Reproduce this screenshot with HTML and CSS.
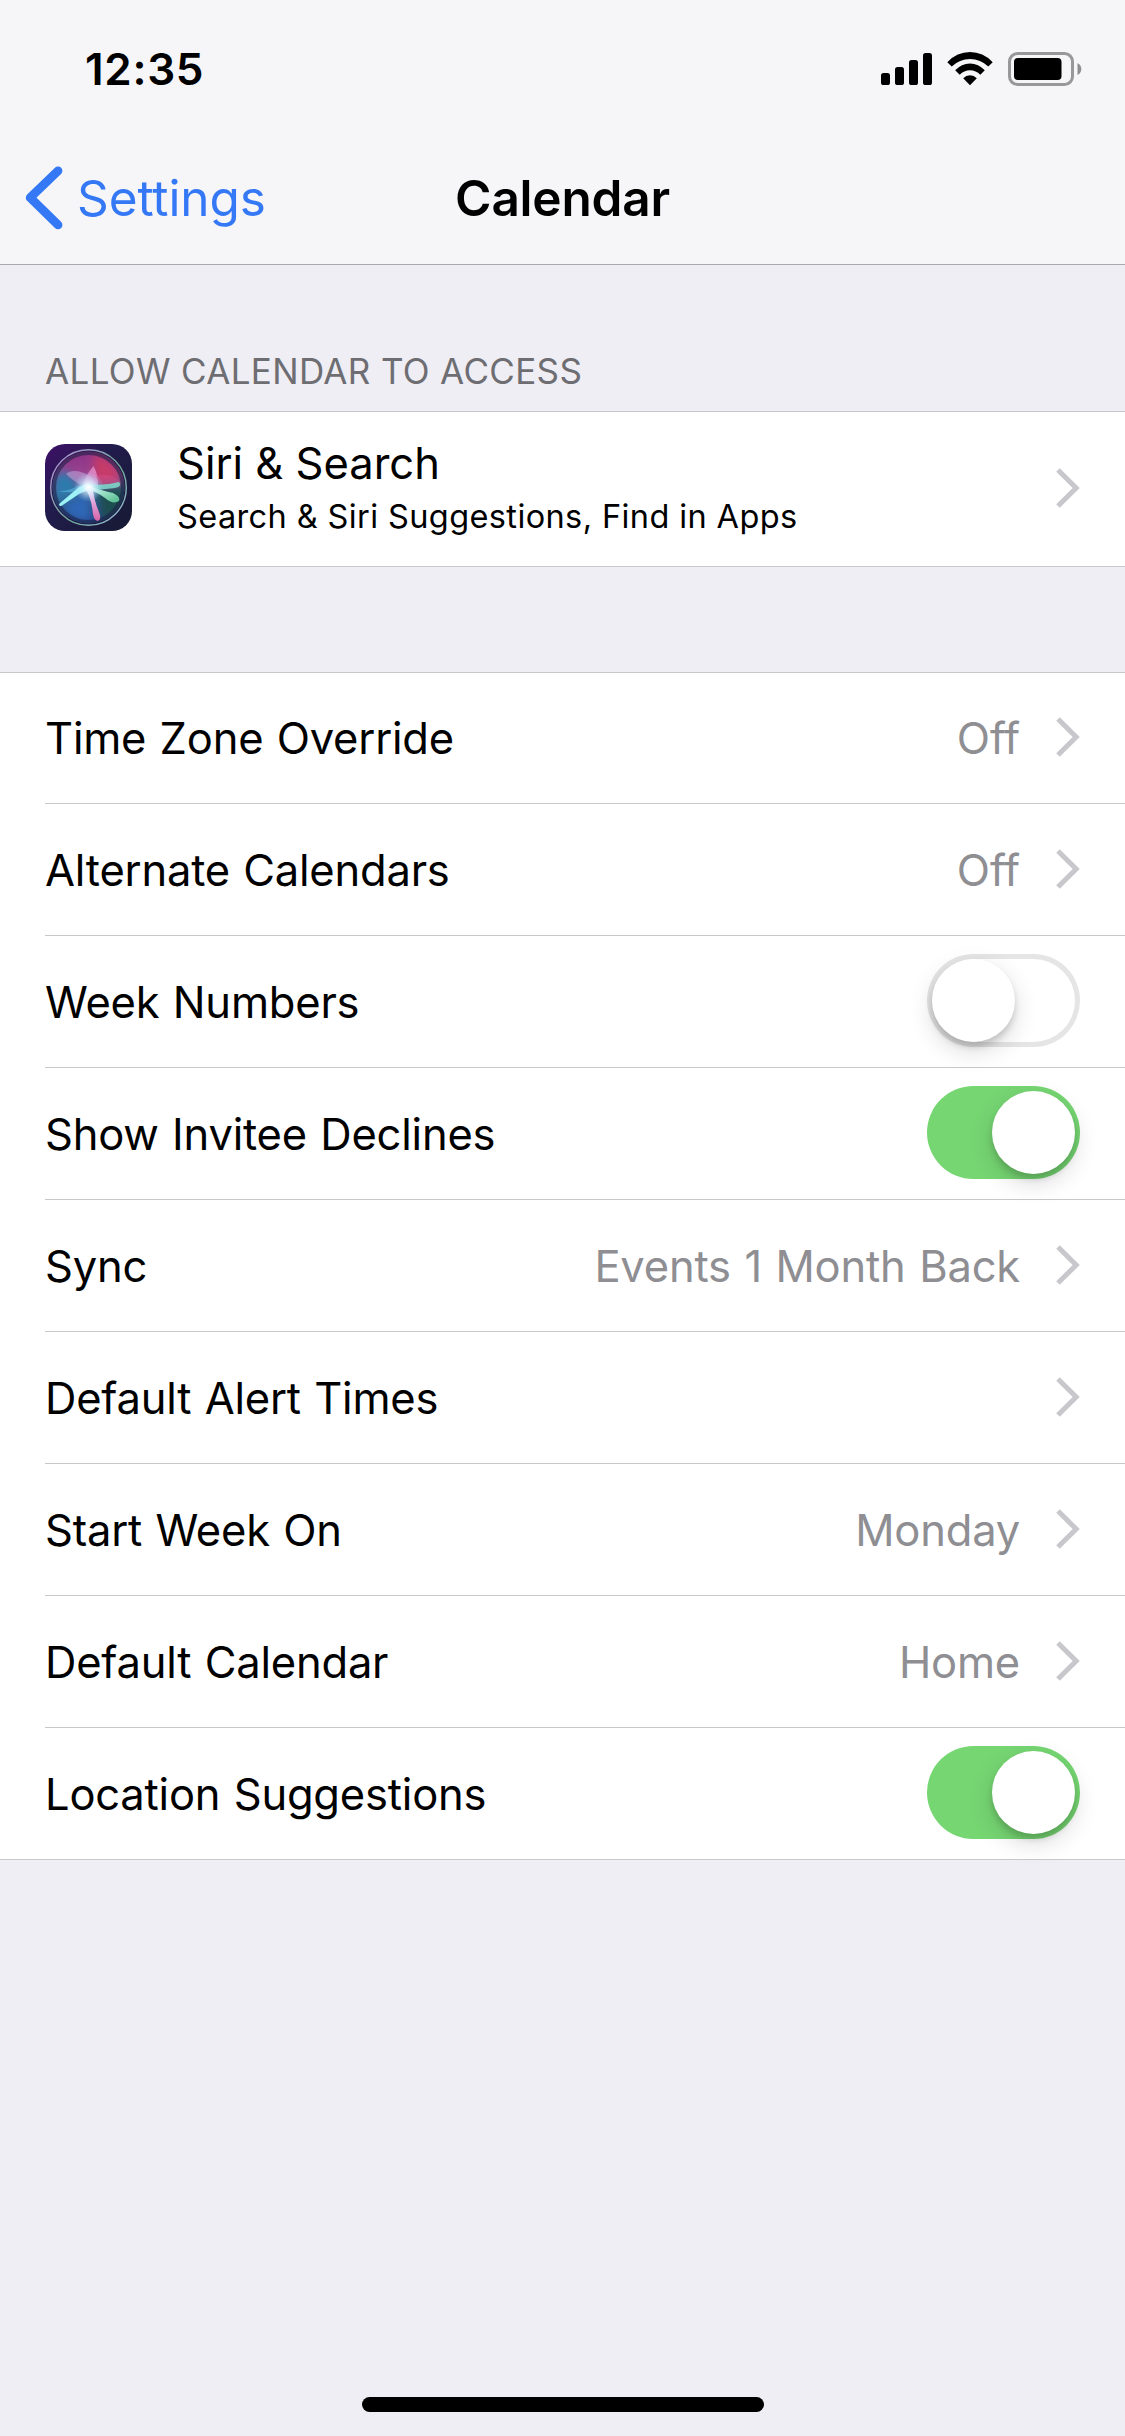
FILE: index.html
```
<!DOCTYPE html>
<html lang="en">
  <head>
    <meta charset="utf-8">
    <title>Calendar</title>
    <link rel="stylesheet" href="styles.css">
  </head>
  <body>
    <!-- shared shapes -->
    <svg class="defs" width="0" height="0">
      <symbol id="chevron" viewBox="0 0 24 40">
        <path d="M2 2L20.2 20L2 38" fill="none" stroke="#c7c7cc" stroke-width="5" />
      </symbol>
    </svg>

    <header class="top">
      <div class="status">
        <span class="time">12:35</span>
        <svg class="signal" width="51" height="34" viewBox="0 0 51 34">
          <rect x="0" y="21" width="9" height="12" rx="2.6" />
          <rect x="14" y="15" width="9" height="18" rx="2.6" />
          <rect x="28" y="8" width="9" height="25" rx="2.6" />
          <rect x="42" y="1" width="9" height="32" rx="2.6" />
        </svg>
        <svg class="wifi" width="46" height="34" viewBox="0 0 46 34">
          <path d="M0.3 10.2Q10 0.1 23 0.1T45.7 10.2L41.3 14.6Q33.5 7 23 7T4.7 14.6Z" />
          <path d="M8.2 18.3Q14.5 11.4 23 11.4T37.8 18.3L33.3 22.8Q29 18.3 23 18.3T12.7 22.8Z" />
          <path d="M16.2 26.3Q19 23.2 23 23.2T29.8 26.3L23 33.2Z" />
        </svg>
        <svg class="battery" width="74" height="34" viewBox="0 0 74 34">
          <rect x="1.5" y="1.5" width="63" height="31" rx="8" fill="none" stroke="#98989a" stroke-width="3" />
          <rect x="6" y="6" width="47.5" height="22" rx="4" />
          <path d="M69.5 11Q73.3 13 73.3 17T69.5 23Z" fill="#8e8e90" />
        </svg>
      </div>
      <nav class="nav">
        <a class="back" href="#">
          <svg width="38" height="64" viewBox="0 0 38 64">
            <path d="M33 4.8L5.2 31.7L33 58.9" fill="none" stroke="#3478f6" stroke-width="8.8" stroke-linecap="round" stroke-linejoin="round" />
          </svg>
          <span>Settings</span>
        </a>
        <h1>Calendar</h1>
      </nav>
    </header>

    <h2 class="section">ALLOW CALENDAR TO ACCESS</h2>
    <ul class="group">
      <li class="row app">
        <svg class="siri" width="87" height="87" viewBox="0 0 87 87">
          <defs>
            <linearGradient id="tile" x1="0" y1="0" x2="1" y2="1">
              <stop offset="0" stop-color="#3f1068" />
              <stop offset="0.4" stop-color="#211c4c" />
              <stop offset="1" stop-color="#161a33" />
            </linearGradient>
            <linearGradient id="orb" x1="0.45" y1="0" x2="0.5" y2="1">
              <stop offset="0" stop-color="#8a2f86" />
              <stop offset="0.35" stop-color="#9a4690" />
              <stop offset="0.6" stop-color="#35648f" />
              <stop offset="1" stop-color="#233f86" />
            </linearGradient>
            <linearGradient id="ring" x1="0" y1="0" x2="1" y2="1">
              <stop offset="0" stop-color="#b68fd6" />
              <stop offset="0.6" stop-color="#6fa898" />
              <stop offset="1" stop-color="#a3c0e6" />
            </linearGradient>
            <radialGradient id="glow">
              <stop offset="0" stop-color="#fff" />
              <stop offset="0.3" stop-color="#e2f8ff" stop-opacity="0.8" />
              <stop offset="1" stop-color="#9fd0ff" stop-opacity="0" />
            </radialGradient>
            <linearGradient id="leaf" x1="0" y1="0" x2="1" y2="1">
              <stop offset="0" stop-color="#d8fff6" />
              <stop offset="1" stop-color="#4fb98a" />
            </linearGradient>
            <linearGradient id="pink" x1="0" y1="0" x2="0" y2="1">
              <stop offset="0" stop-color="#fff0ff" />
              <stop offset="0.5" stop-color="#dfa0d8" />
              <stop offset="1" stop-color="#d660a4" />
            </linearGradient>
            <filter id="soft" x="-30%" y="-30%" width="160%" height="160%"><feGaussianBlur stdDeviation="4" /></filter>
            <filter id="edge"><feGaussianBlur stdDeviation="0.6" /></filter>
            <clipPath id="disc"><circle cx="43.5" cy="43.5" r="36" /></clipPath>
          </defs>
          <rect width="87" height="87" rx="20" fill="url(#tile)" />
          <g clip-path="url(#disc)">
            <circle cx="43.5" cy="43.5" r="38" fill="url(#orb)" />
            <g filter="url(#soft)">
              <path d="M48 10Q70 14 76 36L50 38Z" fill="#c83a68" />
              <path d="M52 46L84 42L76 68L58 80Z" fill="#1f4d50" />
              <path d="M8 34L20 26L36 44L12 58Z" fill="#2a7cae" />
              <path d="M18 62L42 48L46 76Q28 80 18 62Z" fill="#2f68b8" />
            </g>
            <circle cx="43.5" cy="43.5" r="34.5" fill="none" stroke="#1c2146" stroke-opacity="0.6" stroke-width="4" />
            <g filter="url(#edge)">
              <path d="M21 30C27 23 50 28 54 46Q38 46 21 30Z" fill="#c9b0e4" opacity="0.5" />
              <path d="M48.500 22Q39 33 37 46L53 44Q54 32 48.500 22Z" fill="#f2a2dc" opacity="0.65" />
              <path d="M12 47Q26 50 42 46L36 40Q24 48 12 47Z" fill="#58b8dc" opacity="0.6" />
              <path d="M50 32Q68 28 75 38Q70 42 56 41Z" fill="#d85088" opacity="0.45" />
              <path d="M43 40Q60 42 74 38Q78 42 70 44Q56 46 43 46Z" fill="#7cdccc" opacity="0.85" />
              <path d="M14 60L34 43L44 39L48 44L34 50L17 61.500Q14 63 14 60Z" fill="#9cf2f4" />
              <path d="M44 42Q58 47 68 49Q76 53 74 57Q68 61 60 54Q52 48 44 46Z" fill="url(#leaf)" />
              <path d="M40 43L47.500 42Q49 57 54 68Q57 76 52.500 77Q48 76 47.500 66Q46 54 40 43Z" fill="url(#pink)" />
            </g>
          </g>
          <circle cx="43.500" cy="43" r="15" fill="url(#glow)" />
          <circle cx="43.5" cy="43.5" r="37.8" fill="none" stroke="url(#ring)" stroke-width="1.4" />
        </svg>
        <div class="text">
          <span class="title">Siri &amp; Search</span>
          <span class="sub">Search &amp; Siri Suggestions, Find in Apps</span>
        </div>
        <svg class="chev"><use href="#chevron" /></svg>
      </li>
    </ul>

    <ul class="group settings">
      <li class="row">
        <span class="label">Time Zone Override</span>
        <span class="value">Off</span>
        <svg class="chev"><use href="#chevron" /></svg>
      </li>
      <li class="row">
        <span class="label">Alternate Calendars</span>
        <span class="value">Off</span>
        <svg class="chev"><use href="#chevron" /></svg>
      </li>
      <li class="row">
        <span class="label">Week Numbers</span>
        <span class="switch"><i class="knob"></i></span>
      </li>
      <li class="row">
        <span class="label">Show Invitee Declines</span>
        <span class="switch on"><i class="knob"></i></span>
      </li>
      <li class="row">
        <span class="label">Sync</span>
        <span class="value">Events 1 Month Back</span>
        <svg class="chev"><use href="#chevron" /></svg>
      </li>
      <li class="row">
        <span class="label">Default Alert Times</span>
        <svg class="chev"><use href="#chevron" /></svg>
      </li>
      <li class="row">
        <span class="label">Start Week On</span>
        <span class="value">Monday</span>
        <svg class="chev"><use href="#chevron" /></svg>
      </li>
      <li class="row">
        <span class="label">Default Calendar</span>
        <span class="value">Home</span>
        <svg class="chev"><use href="#chevron" /></svg>
      </li>
      <li class="row">
        <span class="label">Location Suggestions</span>
        <span class="switch on"><i class="knob"></i></span>
      </li>
    </ul>

    <div class="home-bar"></div>
  </body>
</html>
```

FILE: styles.css
```
* {
  box-sizing: border-box;
}
body {
  display: flex;
  flex-direction: column;
  width: 1125px;
  height: 2436px;
  margin: 0;
  background: #efeef4;
  color: #000;
  font-family: Inter, "Liberation Sans", sans-serif;
  font-size: 43.5px;
  letter-spacing: -0.2px;
}
svg {
  display: block;
  flex: none;
}
.defs {
  position: absolute;
}

/* status bar + navigation */
.top {
  height: 265px;
  background: #f6f6f8;
  border-bottom: 1px solid #a9a8ae;
}
.status {
  display: flex;
  align-items: center;
  height: 132px;
  padding: 6px 43px 0 85px;
}
.time {
  flex: 1;
  font-size: 44px;
  font-weight: 600;
  letter-spacing: 0.7px;
}
.wifi {
  margin: 0 15px;
}
.nav {
  display: grid;
  grid-template-columns: 1fr auto 1fr;
  align-items: center;
  height: 132px;
  padding: 0 25px;
}
.back {
  display: flex;
  align-items: center;
  gap: 14px;
  color: #3478f6;
  font-size: 49.5px;
  letter-spacing: -0.1px;
  text-decoration: none;
}
.nav h1 {
  margin: 0;
  font-size: 49.5px;
  font-weight: 600;
}

/* lists */
.section {
  height: 146px;
  margin: 0;
  padding: 85px 45px 0 45px;
  color: #6d6d72;
  font-size: 35px;
  font-weight: 400;
  line-height: 42px;
  letter-spacing: 0.35px;
}
.group {
  margin: 0;
  padding: 0 0 0 45px;
  list-style: none;
  background: #fff;
  border-top: 1px solid #c8c7cc;
  border-bottom: 1px solid #c8c7cc;
}
.settings {
  margin-top: 105px;
}
.row {
  display: flex;
  align-items: center;
  height: 132px;
  padding-right: 45px;
  border-bottom: 1px solid #c8c7cc;
}
.row:first-child {
  height: 131px;
}
.row:last-child {
  height: 131px;
  border-bottom: 0;
}
.row.app {
  height: 154px;
}
.label {
  flex: 1;
  word-spacing: 1.3px;
}
.value {
  color: #8e8e93;
  word-spacing: 1.6px;
}
.chev {
  width: 24px;
  height: 40px;
  margin: 0 0 2px 36px;
}

.siri {
  margin-bottom: 3px;
}
.text {
  display: flex;
  flex: 1;
  flex-direction: column;
  padding: 0 0 4px 45px;
}
.title {
  line-height: 60px;
  letter-spacing: 0;
}
.sub {
  font-size: 32.5px;
  line-height: 48px;
  letter-spacing: 0.39px;
}

/* switch */
.switch {
  width: 153px;
  height: 93px;
  margin-bottom: 2px;
  padding: 5px;
  border-radius: 47px;
  background: #fff;
  box-shadow: inset 0 0 0 5px #e5e5e5;
}
.knob {
  display: block;
  width: 83px;
  height: 83px;
  border-radius: 50%;
  background: #fff;
  box-shadow: 0 9px 24px rgba(0, 0, 0, 0.15), 0 5px 6px rgba(0, 0, 0, 0.15);
}
.switch.on {
  background: #76d672;
  box-shadow: none;
}
.on .knob {
  margin-left: auto;
}

.home-bar {
  width: 402px;
  height: 15px;
  margin: auto auto 24px 362px;
  border-radius: 8px;
  background: #000;
}
```
